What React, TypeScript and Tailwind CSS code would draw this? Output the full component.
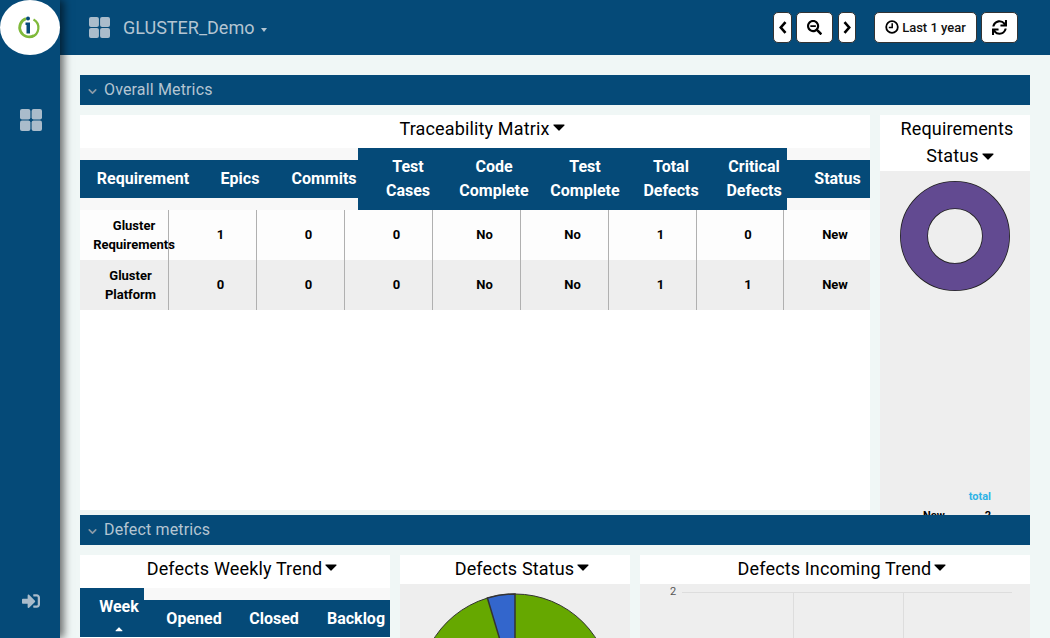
import { ChevronDown } from "lucide-react";
import { FaSearchMinus, FaSync, FaSignInAlt, FaCaretUp } from "react-icons/fa";

const Grid = ({ className }: { className: string }) => (
  <svg viewBox="0 0 22 22" className={className} fill="currentColor">
    <rect x="0" y="0" width="10.4" height="10.4" rx="2" />
    <rect x="11.6" y="0" width="10.4" height="10.4" rx="2" />
    <rect x="0" y="11.6" width="10.4" height="10.4" rx="2" />
    <rect x="11.6" y="11.6" width="10.4" height="10.4" rx="2" />
  </svg>
);

const Caret = () => (
  <svg viewBox="0 0 12 7" className="inline-block w-[12px] h-[7px] ml-[3px] mb-[2px]">
    <path d="M1 1H11L6 6Z" fill="#000" stroke="#000" strokeWidth="1.2" strokeLinejoin="round" />
  </svg>
);

const Section = ({ label }: { label: string }) => (
  <div className="relative z-10 h-[30px] shrink-0 bg-[#054a78] flex items-center pl-[6px] text-[#b4c5d2] text-[16px] tracking-[0.15px]">
    <ChevronDown className="w-[13px] h-[13px] text-[#8c9aa6] mr-[5px] mt-[3px]" strokeWidth={3} />
    {label}
  </div>
);

const heads: [string, string, boolean][] = [
  ["Requirement", "w-[126px]", false],
  ["Epics", "w-[68px]", false],
  ["Commits", "w-[84px] pl-[16px]", false],
  ["Test Cases", "w-[100px] px-[28px]", true],
  ["Code Complete", "w-[72px]", true],
  ["Test Complete", "w-[110px] px-[20px]", true],
  ["Total Defects", "w-[62px]", true],
  ["Critical Defects", "w-[85px] pl-[19px]", true],
  ["Status", "w-[83px] pl-[18px]", false],
];

const rows = [
  ["Gluster Requirements", "1", "0", "0", "No", "No", "1", "0", "New"],
  ["Gluster Platform", "0", "0", "0", "No", "No", "1", "1", "New"],
];

const bodyW = ["w-[89px]", "w-[88px]", "w-[88px]", "w-[88px]", "w-[88px]", "w-[88px]", "w-[88px]", "w-[87px]", "w-[86px]"];

const btn = "h-[31px] bg-white rounded-[5px] border border-[#333] flex items-center justify-center";

const Title = ({ h, children }: { h: string; children: React.ReactNode }) => (
  <div className={`${h} shrink-0 flex items-center justify-center pl-[14px] text-[18px] text-black tracking-[0.15px]`}>{children}<Caret /></div>
);

export default function App() {
  return (
    <div className="h-[638px] w-[1050px] overflow-hidden flex bg-[#f0f7f6] font-['Roboto',sans-serif]">
      <aside className="relative z-20 w-[60px] shrink-0 bg-[#054a78] shadow-[4px_0_8px_rgba(0,0,0,0.55)] flex flex-col items-center">
        <div className="w-[60px] h-[55px] rounded-[50%] bg-white flex items-center justify-center">
          <svg viewBox="0 0 24 25" className="w-[24px] h-[25px] -ml-[2px]">
            <path d="M9 3.6A9.4 9.4 0 1 0 17 20.5" fill="none" stroke="#7fb93a" strokeWidth="2.8" />
            <path d="M14.5 21.8A9.4 9.4 0 0 0 16.5 4.5" fill="none" stroke="#7fb93a" strokeWidth="2.2" />
            <circle cx="11" cy="3.6" r="2" fill="#054a78" />
            <path d="M8.5 7.5H13V18.5H9.5V10H8.5Z" fill="#054a78" />
          </svg>
        </div>
        <Grid className="w-[22px] h-[22px] text-[#aabccb] mt-[54px] ml-[2px]" />
        <FaSignInAlt className="w-[18px] h-[18px] text-[#aabccb] mt-auto mb-[28px] ml-[2px]" />
      </aside>
      <div className="flex-1 min-w-0 flex flex-col">
        <header className="h-[55px] shrink-0 bg-[#054a78] flex items-center pl-[29px] pr-[32px]">
          <Grid className="w-[21px] h-[21px] text-[#aabccb]" />
          <span className="ml-[13px] text-[18px] text-[#b4c5d2]">GLUSTER_Demo</span>
          <span className="ml-[7px] mt-[5px] w-0 h-0 border-x-[3.5px] border-x-transparent border-t-[4px] border-t-[#b4c5d2]" />
          <div className="ml-auto flex items-center">
            <button className={`${btn} w-[19px]`}>
              <svg viewBox="0 0 8 13" className="w-[8px] h-[13px]"><path d="M6.5 1.2L1.8 6.5L6.5 11.8" fill="none" stroke="#000" strokeWidth="2.6" /></svg>
            </button>
            <button className={`${btn} ml-[4px] w-[37px]`}><FaSearchMinus className="w-[15px] h-[15px]" /></button>
            <button className={`${btn} ml-[5px] w-[18px]`}>
              <svg viewBox="0 0 8 13" className="w-[8px] h-[13px]"><path d="M1.5 1.2L6.2 6.5L1.5 11.8" fill="none" stroke="#000" strokeWidth="2.6" /></svg>
            </button>
            <button className={`${btn} ml-[18px] w-[103px] text-[13px] font-medium text-[#111]`}>
              <svg viewBox="0 0 14 14" className="w-[14px] h-[14px] mr-[3px] -mt-[2px]">
                <circle cx="7" cy="7" r="5.8" fill="none" stroke="#000" strokeWidth="1.8" />
                <path d="M7.2 3.2V7.6H3.8" fill="none" stroke="#000" strokeWidth="1.5" />
              </svg>
              Last 1 year
            </button>
            <button className={`${btn} ml-[4px] w-[37px]`}><FaSync className="w-[15px] h-[15px]" /></button>
          </div>
        </header>
        <main className="flex-1 min-h-0 flex flex-col overflow-hidden px-[20px] pt-[20px]">
          <Section label="Overall Metrics" />
          <div className="h-[410px] shrink-0 flex gap-[10px] pt-[10px] overflow-hidden">
            <div className="w-[790px] h-[395px] shrink-0 bg-white flex flex-col">
              <Title h="h-[33px] pb-[7px]">Traceability Matrix</Title>
              <div className="h-[62px] shrink-0 bg-[#f8f8f8] flex items-center text-white font-bold text-[16px] leading-[24px] text-center">
                {heads.map(([t, w, tall]) => (
                  <div key={t} className={`${w} ${tall ? "h-[62px]" : "h-[38px]"} shrink-0 bg-[#054a78] flex items-center justify-center`}>
                    <span className="block">{t}</span>
                  </div>
                ))}
              </div>
              {rows.map((r, i) => (
                <div key={r[0]} className={`h-[50px] flex text-[13px] font-bold text-black leading-[19px] text-center ${i ? "bg-[#eeeeee]" : "bg-[#fdfdfd]"}`}>
                  {r.map((c, j) => (
                    <div key={j} className={`${bodyW[j]} shrink-0 flex items-center justify-center ${j > 0 ? "pl-[16px] pb-[2px]" : ""} ${j < 8 ? "border-r border-[#b0b0b0]" : ""}`}>
                      {j === 0 ? <span className={`block shrink-0 ${i ? "ml-[13px] w-[70px]" : "ml-[20px] w-[90px]"}`}>{c}</span> : c}
                    </div>
                  ))}
                </div>
              ))}
            </div>
            <div className="w-[150px] h-[400px] shrink-0 bg-white flex flex-col">
              <div className="h-[56px] shrink-0 text-[18px] leading-[27px] text-center text-black pl-[10px] pr-[6px] tracking-[0.15px]">
                <div>Requirements</div>
                <div className="pl-[6px]">Status<Caret /></div>
              </div>
              <div className="flex-1 bg-[#eeeeee] pt-[10px] flex flex-col">
                <svg viewBox="0 0 110 110" className="w-[110px] h-[110px] ml-[20px] shrink-0">
                  <circle cx="55" cy="55" r="41" fill="none" stroke="#222" strokeWidth="28" />
                  <circle cx="55" cy="55" r="41" fill="none" stroke="#624a91" strokeWidth="26.4" />
                </svg>
                <div className="mt-[200px] pr-[39px] text-right text-[11px] font-bold text-[#2fb3e6] leading-[12px]">total</div>
                <div className="mt-[7px] flex text-[11px] font-bold text-black leading-[12px]"><span className="ml-[43px]">New</span><span className="ml-[40px]">2</span></div>
              </div>
            </div>
          </div>
          <Section label="Defect metrics" />
          <div className="flex gap-[10px] mt-[10px] h-[83px] shrink-0 overflow-hidden">
            <div className="w-[310px] shrink-0 bg-white flex flex-col">
              <Title h="h-[33px] pb-[7px]">Defects Weekly Trend</Title>
              <div className="h-[49px] bg-[#f8f8f8] flex items-end text-white font-bold text-[16px] text-center">
                <div className="w-[64px] h-[49px] bg-[#054a78] pt-[7px] pl-[14px] leading-[24px]">Week<FaCaretUp className="w-[12px] h-[12px] mx-auto mt-[4px]" /></div>
                <div className="w-[100px] h-[37px] bg-[#054a78] flex items-center justify-center">Opened</div>
                <div className="w-[60px] h-[37px] bg-[#054a78] flex items-center justify-center">Closed</div>
                <div className="w-[86px] h-[37px] bg-[#054a78] flex items-center justify-center pl-[18px]">Backlog</div>
              </div>
            </div>
            <div className="w-[230px] shrink-0 bg-white flex flex-col">
              <Title h="h-[29px] pb-[2px]">Defects Status</Title>
              <div className="flex-1 bg-[#eeeeee]">
                <svg viewBox="0 0 230 54" className="w-[230px] h-[54px]">
                  <circle cx="115" cy="106" r="96" fill="#66a800" stroke="#333" strokeWidth="1" />
                  <path d="M115 106L115 10A96 96 0 0 0 87.4 14Z" fill="#3366cc" stroke="#333" strokeWidth="1.5" />
                </svg>
              </div>
            </div>
            <div className="w-[390px] shrink-0 bg-white flex flex-col">
              <Title h="h-[29px] pb-[2px]">Defects Incoming Trend</Title>
              <div className="flex-1 bg-[#eeeeee] relative">
                <svg viewBox="0 0 390 54" className="w-[390px] h-[54px]">
                  <path d="M42 8.5H372M153.5 8V54M263.5 8V54" stroke="#dddddd" strokeWidth="1" fill="none" />
                </svg>
                <span className="absolute left-[30px] top-[1px] text-[11px] leading-[14px] text-[#555]">2</span>
              </div>
            </div>
          </div>
        </main>
      </div>
    </div>
  );
}
